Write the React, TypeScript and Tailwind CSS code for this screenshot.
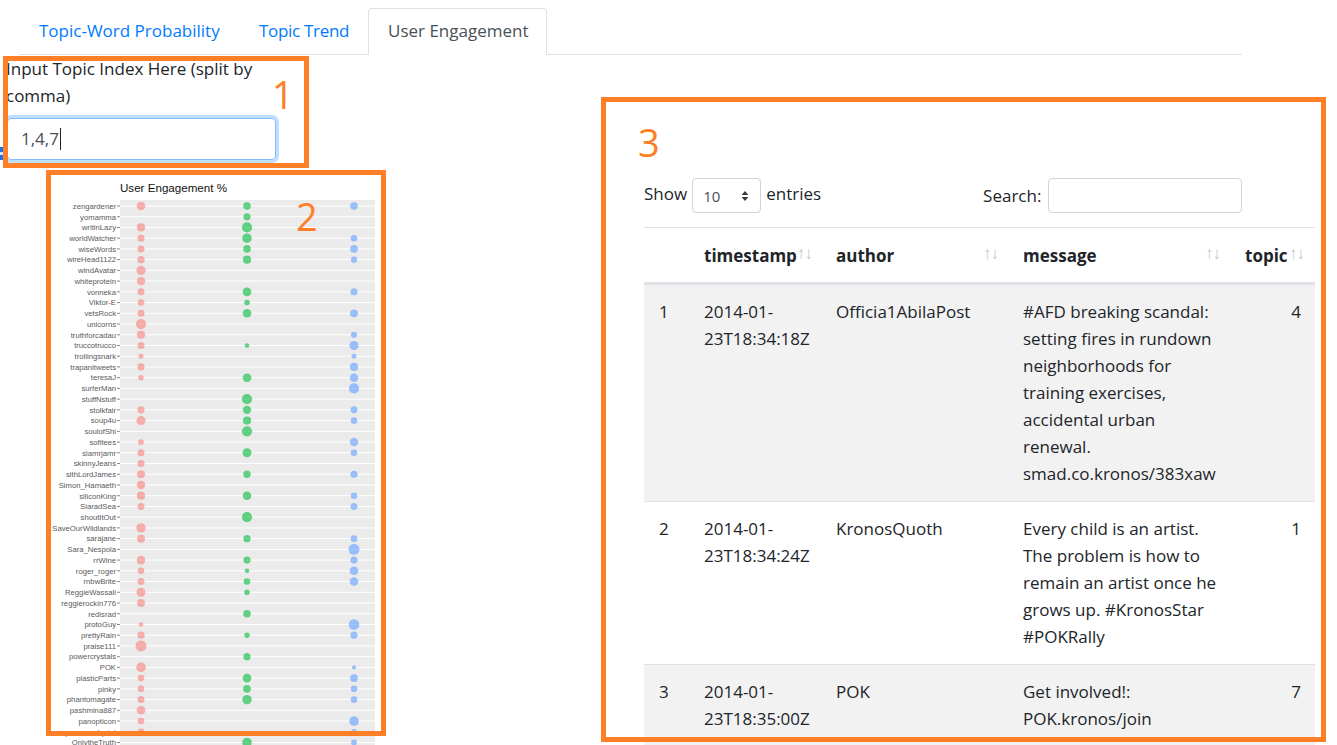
const chartRows: [string, number, number, number][] = [
  ['zengardener', 4, 3.5, 3.5],
  ['yomamma', 0, 3.3, 0],
  ['writinLazy', 3.8, 4.8, 0],
  ['worldWatcher', 3.2, 4.4, 3],
  ['wiseWords', 3.2, 3.5, 3.5],
  ['wireHead1122', 3.4, 3.8, 2.8],
  ['windAvatar', 4.3, 0, 0],
  ['whiteprotein', 3.8, 0, 0],
  ['vonneka', 3.2, 4, 3.2],
  ['Viktor-E', 3, 2.5, 0],
  ['vetsRock', 3.2, 4, 3.6],
  ['unicorns', 4.8, 0, 0],
  ['truthforcadau', 3.8, 0, 2.8],
  ['truccotrucco', 3.2, 2, 4.2],
  ['trollingsnark', 2.2, 0, 2.2],
  ['trapanitweets', 3.3, 0, 3.8],
  ['teresaJ', 2.4, 4, 3.9],
  ['surferMan', 0, 0, 4.8],
  ['stuffNstuff', 0, 4.8, 0],
  ['stolkfair', 3.3, 3.9, 3.2],
  ['soup4u', 4.2, 3.8, 3],
  ['soulofShi', 0, 4.8, 0],
  ['sofitees', 2.6, 0, 3.9],
  ['slamrjamr', 3.2, 4.2, 3],
  ['skinnyJeans', 3.3, 0, 0],
  ['sithLordJames', 3.6, 3.4, 3.3],
  ['Simon_Hamaeth', 3.9, 0, 0],
  ['siliconKing', 3.8, 4, 3],
  ['SiaradSea', 3.2, 0, 3.2],
  ['shoutItOut', 0, 4.8, 0],
  ['SaveOurWildlands', 4.4, 0, 0],
  ['sarajane', 3.7, 3.3, 3],
  ['Sara_Nespola', 0, 0, 5.2],
  ['rrWine', 4, 3.3, 3.3],
  ['roger_roger', 3, 2, 4],
  ['rnbwBrite', 3.2, 3, 4],
  ['ReggieWassali', 4.2, 2.5, 0],
  ['reggierockin776', 3.6, 0, 0],
  ['redisrad', 0, 3.5, 0],
  ['protoGuy', 2, 0, 5],
  ['prettyRain', 3.3, 2.4, 3.3],
  ['praise111', 5.2, 0, 0],
  ['powercrystals', 0, 3.3, 0],
  ['POK', 4.5, 0, 1.8],
  ['plasticParts', 3, 4, 3.6],
  ['pinky', 3, 3.6, 3],
  ['phantomagate', 3.2, 4.4, 3],
  ['pashmina887', 4, 0, 0],
  ['panopticon', 3, 0, 4.5],
  ['peaceandquiet', 3, 0, 2.5],
  ['OnlytheTruth', 0, 4.5, 2.6],
];

const tableRows = [
  {
    id: 1,
    timestamp: '2014-01-23T18:34:18Z',
    author: 'Officia1AbilaPost',
    message: '#AFD breaking scandal: setting fires in rundown neighborhoods for training exercises, accidental urban renewal. smad.co.kronos/383xaw',
    topic: 4,
  },
  {
    id: 2,
    timestamp: '2014-01-23T18:34:24Z',
    author: 'KronosQuoth',
    message: 'Every child is an artist. The problem is how to remain an artist once he grows up. #KronosStar #POKRally',
    topic: 1,
  },
  {
    id: 3,
    timestamp: '2014-01-23T18:35:00Z',
    author: 'POK',
    message: 'Get involved!: POK.kronos/join',
    topic: 7,
  },
];

// ggplot-style dot chart, svg origin sits at page (46, 170)
function EngagementChart() {
  const rowY = (i: number) => 36 + i * 10.73;
  return (
    <svg width="340" height="575" className="block">
      <text x="74" y="22" fontSize="11.6" fill="#111" fontFamily="Liberation Sans, sans-serif">
        User Engagement %
      </text>
      <rect x="74" y="30" width="255" height="545" fill="#ebebeb" />
      {chartRows.map(([name, red, green, blue], i) => (
        <g key={name}>
          <line x1="74" x2="329" y1={rowY(i)} y2={rowY(i)} stroke="#fff" strokeWidth="1" />
          <line x1="71" x2="74" y1={rowY(i)} y2={rowY(i)} stroke="#555" strokeWidth="0.7" />
          <text x="70" y={rowY(i) + 2.8} textAnchor="end" fontSize="7.7" fill="#5a5a5a" fontFamily="Liberation Sans, sans-serif">
            {name}
          </text>
          {red > 0 && <circle cx="95" cy={rowY(i)} r={red + 0.3} fill="#F8766D" fillOpacity="0.55" />}
          {green > 0 && <circle cx="201" cy={rowY(i)} r={green + 0.3} fill="#00BA38" fillOpacity="0.6" />}
          {blue > 0 && <circle cx="308" cy={rowY(i)} r={blue + 0.3} fill="#619CFF" fillOpacity="0.6" />}
        </g>
      ))}
    </svg>
  );
}

function SortArrows() {
  return (
    <span className="shrink-0 -mt-[5px] text-[17px] leading-none font-normal text-[#c4c7ca] tracking-[-1px]">↑↓</span>
  );
}

function HeaderCell({ label, className }: { label: string; className: string }) {
  return (
    <th className={`pl-[15px] text-left font-bold ${className}`}>
      <div className="flex items-center justify-between">
        <span>{label}</span>
        <SortArrows />
      </div>
    </th>
  );
}

export default function App() {
  return (
    <div className="relative h-[745px] overflow-hidden bg-white pt-2 font-['Open_Sans',sans-serif] text-[17px] leading-[27px] text-[#212529]">
      {/* Tabs */}
      <div className="ml-[19px] flex h-[47px] w-[1223px] border-b border-[#dee2e6]">
        <a className="w-[221px] pl-5 pt-[9px] text-[#007bff]">Topic-Word Probability</a>
        <a className="w-[128px] pl-[19px] pt-[9px] tracking-[-0.3px] text-[#007bff]">Topic Trend</a>
        <a className="h-[47px] w-[179px] rounded-t border border-b-0 border-[#dee2e6] bg-white pl-[19px] pt-[8px] text-[#495057]">User Engagement</a>
      </div>

      <div className="flex">
        {/* Left column */}
        <div className="w-[600px] shrink-0">
          <div className="ml-[6px] w-[271px]">
            <label className="block">Input Topic Index Here (split by comma)</label>
            <div className="ml-[1px] mt-[9px] flex h-[42px] w-[269px] items-center rounded border border-[#80bdff] pb-px pl-[13px] text-[#495057] shadow-[0_0_0_3px_#bfdeff]">
              1,4,7
              <span className="ml-px h-[22px] w-px bg-[#222]" />
            </div>
          </div>
          <div className="ml-[46px] mt-[10px]">
            <EngagementChart />
          </div>
        </div>

        {/* Right column: data table */}
        <div className="ml-[44px] w-[671px] pt-[123px]">
          <div className="flex h-[49px] items-start">
            <div className="flex items-start">
              <span className="mt-[2px]">Show</span>
              <div className="ml-[5px] flex h-[35px] w-[69px] items-center justify-between rounded border border-[#ced4da] pl-[10px] pr-[11px] text-[15px] text-[#495057]">
                <span className="mt-[2px]">10</span>
                <svg width="8" height="12" viewBox="0 0 8 12" className="fill-[#343a40]">
                  <path d="M4 1 7.4 5H.6z" />
                  <path d="M4 11 .6 7h6.8z" />
                </svg>
              </div>
              <span className="ml-[5px] mt-[2px]">entries</span>
            </div>
            <div className="ml-[162px] flex items-start">
              <span className="mt-[4px]">Search:</span>
              <div className="ml-[7px] h-[35px] w-[194px] rounded border border-[#ced4da]" />
            </div>
          </div>

          <table className="w-[671px] table-fixed border-collapse">
            <colgroup>
              <col className="w-[45px]" />
              <col className="w-[132px]" />
              <col className="w-[187px]" />
              <col className="w-[222px]" />
              <col className="w-[85px]" />
            </colgroup>
            <thead>
              <tr className="h-[56px] border-b-[3px] border-t-[1px] border-[#dee2e6]">
                <th />
                <HeaderCell label="timestamp" className="pr-[10px]" />
                <HeaderCell label="author" className="pr-[10px]" />
                <HeaderCell label="message" className="pr-[10px]" />
                <HeaderCell label="topic" className="pr-[11px]" />
              </tr>
            </thead>
            <tbody>
              {tableRows.map((row, i) => (
                <tr key={row.id} className={`border-b border-[#dee2e6] align-top ${i % 2 === 0 ? 'bg-[#f2f2f2]' : 'bg-white'}`}>
                  <td className="pb-[14px] pl-[15px] pt-[13px]">{row.id}</td>
                  <td className="pb-[14px] pl-[15px] pt-[13px]">{row.timestamp}</td>
                  <td className="pb-[14px] pl-[15px] pt-[13px]">{row.author}</td>
                  <td className="pb-[14px] pl-[15px] pr-[10px] pt-[13px]">{row.message}</td>
                  <td className="pb-[14px] pr-[14px] pt-[13px] text-right">{row.topic}</td>
                </tr>
              ))}
            </tbody>
          </table>
        </div>
      </div>

      {/* Orange annotations drawn over the page */}
      <div className="pointer-events-none absolute left-[3px] top-[56px] h-[112px] w-[306px] border-[5px] border-[#ff7f27]" />
      <div className="pointer-events-none absolute left-[46px] top-[170px] h-[566px] w-[340px] border-[5px] border-[#ff7f27]" />
      <div className="pointer-events-none absolute left-[601px] top-[97px] h-[645px] w-[725px] border-[5px] border-[#ff7f27]" />
      <span className="absolute left-[272px] top-[72px] text-[38px] leading-[44px] text-[#ff7f27]">1</span>
      <span className="absolute left-[296px] top-[194px] text-[38px] leading-[44px] text-[#ff7f27]">2</span>
      <span className="absolute left-[638px] top-[120px] text-[38px] leading-[44px] text-[#ff7f27]">3</span>
      {/* selection handle cut off at the left edge */}
      <div className="absolute left-0 top-[147px] h-[13px] w-[3px] border-y-[5px] border-[#1a73e8] bg-[#cfe3fb]" />
    </div>
  );
}
